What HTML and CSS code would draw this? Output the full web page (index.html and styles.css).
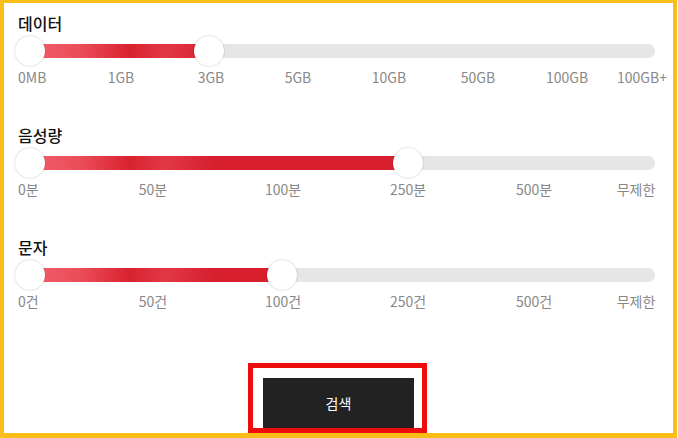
FILE: index.html
```html
<!DOCTYPE html>
<html lang="ko">
<head>
<meta charset="utf-8">
<link rel="stylesheet" href="styles.css">
</head>
<body>
<div class="frame">
  <section class="filter">
    <h3 class="title">데이터</h3>
    <div class="slider">
      <div class="track"></div>
      <div class="fill" style="left:14px;width:179px"></div>
      <span class="thumb" style="left:14px"></span>
      <span class="thumb" style="left:193px"></span>
    </div>
    <div class="ticks">
      <span class="tick first">0MB</span>
      <span class="tick" style="left:105px">1GB</span>
      <span class="tick" style="left:195px">3GB</span>
      <span class="tick" style="left:282px">5GB</span>
      <span class="tick" style="left:373px">10GB</span>
      <span class="tick" style="left:462px">50GB</span>
      <span class="tick" style="left:551px">100GB</span>
      <span class="tick" style="left:626px">100GB+</span>
    </div>
  </section>

  <section class="filter">
    <h3 class="title">음성량</h3>
    <div class="slider">
      <div class="track"></div>
      <div class="fill" style="left:14px;width:378px"></div>
      <span class="thumb" style="left:14px"></span>
      <span class="thumb" style="left:392px"></span>
    </div>
    <div class="ticks">
      <span class="tick first">0분</span>
      <span class="tick" style="left:137px">50분</span>
      <span class="tick" style="left:267px">100분</span>
      <span class="tick" style="left:392px">250분</span>
      <span class="tick" style="left:518px">500분</span>
      <span class="tick" style="left:620px">무제한</span>
    </div>
  </section>

  <section class="filter">
    <h3 class="title">문자</h3>
    <div class="slider">
      <div class="track"></div>
      <div class="fill" style="left:14px;width:252px"></div>
      <span class="thumb" style="left:14px"></span>
      <span class="thumb" style="left:266px"></span>
    </div>
    <div class="ticks">
      <span class="tick first">0건</span>
      <span class="tick" style="left:137px">50건</span>
      <span class="tick" style="left:267px">100건</span>
      <span class="tick" style="left:392px">250건</span>
      <span class="tick" style="left:518px">500건</span>
      <span class="tick" style="left:620px">무제한</span>
    </div>
  </section>

  <div class="actions">
    <div class="highlight">
      <button class="search" type="button">검색</button>
    </div>
  </div>
</div>
</body>
</html>
```

FILE: styles.css
```css
html, body {
  margin: 0;
  padding: 0;
  background: #ffffff;
}

body {
  font-family: "Noto Sans CJK KR", "Noto Sans", sans-serif;
}

.frame {
  width: 677px;
  height: 438px;
  box-sizing: border-box;
  border-style: solid;
  border-color: #fbbd17;
  border-width: 3px 4px 5px 4px;
  padding: 10px 18px 0 12px;
  overflow: hidden;
  display: flex;
  flex-direction: column;
}

.filter {
  display: flex;
  flex-direction: column;
  flex-shrink: 0;
  margin-bottom: 40px;
}

.title {
  margin: 0;
  padding-left: 2px;
  font-size: 16px;
  line-height: 20px;
  font-weight: 500;
  color: #111111;
}

.slider {
  position: relative;
  height: 30px;
  margin-top: 3px;
  display: flex;
  align-items: center;
}

.track {
  flex: 1;
  height: 14px;
  border-radius: 7px;
  background: #e6e6e6;
}

.fill {
  position: absolute;
  top: 8px;
  height: 14px;
  background: linear-gradient(90deg, #f0606c 0px, #eb4c59 50px, #d9232f 100px, #e23846 135px, #d71f2d 185px, #d71f2d 100%);
}

.thumb {
  position: absolute;
  top: 0;
  width: 30px;
  height: 30px;
  margin-left: -15px;
  border-radius: 50%;
  background: #ffffff;
  box-shadow: 0 0 2px rgba(0, 0, 0, 0.28);
}

.ticks {
  position: relative;
  height: 16px;
  margin-top: 3px;
}

.tick {
  position: absolute;
  top: 0;
  transform: translateX(-50%);
  font-size: 14px;
  line-height: 16px;
  color: #888888;
  white-space: nowrap;
}

.tick.first {
  left: 2px;
  transform: none;
}

.actions {
  display: flex;
  justify-content: center;
  flex-shrink: 0;
  margin-top: 14px;
  padding-left: 4px;
}

.highlight {
  border: 5px solid #ee0d0d;
  padding: 10px 8px 0 10px;
}

.search {
  display: block;
  width: 151px;
  height: 50px;
  border: none;
  background: #222222;
  color: #ffffff;
  font-family: "Noto Sans CJK KR", "Noto Sans", sans-serif;
  font-size: 14px;
  font-weight: 400;
  padding: 0;
}
```
